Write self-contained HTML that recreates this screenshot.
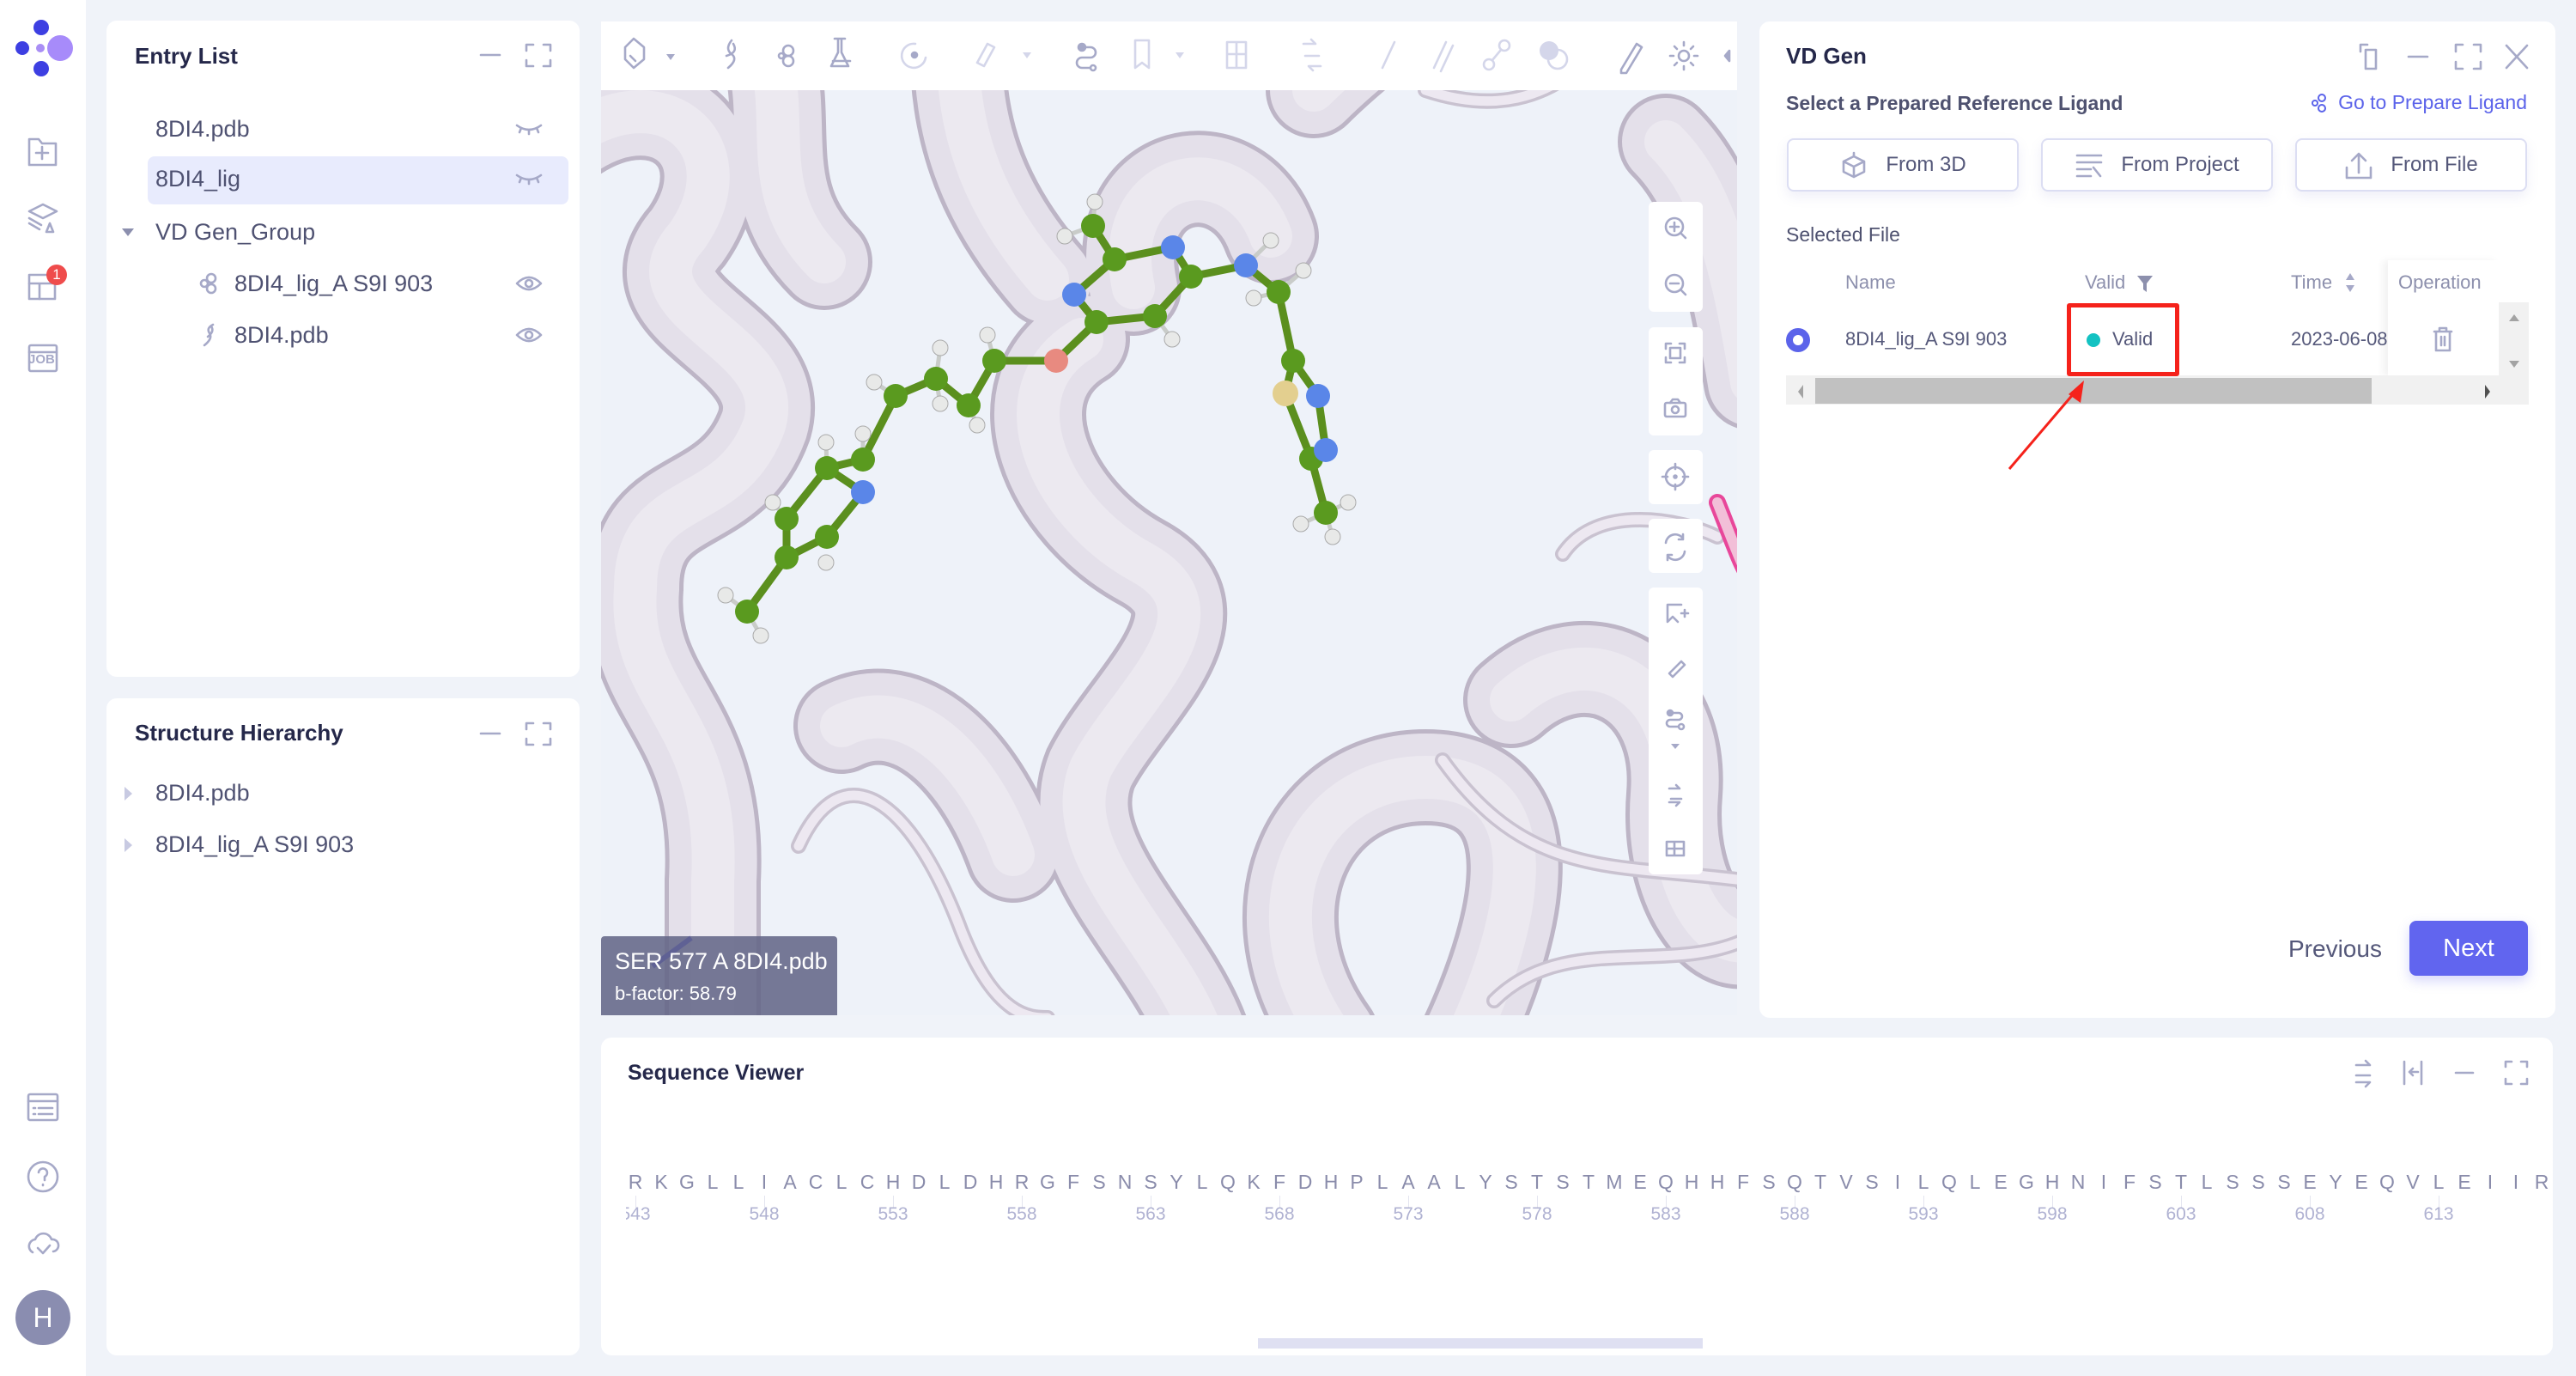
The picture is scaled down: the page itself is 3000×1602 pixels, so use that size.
<!DOCTYPE html>
<html><head><meta charset="utf-8">
<style>
*{box-sizing:border-box;margin:0;padding:0}
body{width:3000px;height:1602px;background:#f0f3f9;font-family:"Liberation Sans",sans-serif;position:relative;overflow:hidden;color:#4a4d6b}
.abs{position:absolute}
.panel{position:absolute;background:#fff;border-radius:12px}
.t{position:absolute;white-space:nowrap;line-height:1}
.title{font-size:26px;font-weight:bold;color:#25284a}
.item{font-size:27px;color:#4f5272}
svg{position:absolute;overflow:visible}
.ic{stroke:#a6a9c8;fill:none;stroke-width:2.6;stroke-linecap:round;stroke-linejoin:round}
.lt{stroke:#d4d6ea}
.btn{position:absolute;border:2px solid #dcdef3;border-radius:8px;background:#fff;box-shadow:0 6px 14px rgba(120,125,200,.12);font-size:24px;color:#55587a;display:flex;align-items:center;justify-content:center;gap:20px}
</style></head><body>

<!-- Sidebar -->
<div class="abs" style="left:0;top:0;width:100px;height:1602px;background:#fff"></div>
<svg style="left:0;top:0" width="100" height="120">
<circle cx="48" cy="32" r="9" fill="#3d3fe2"/><circle cx="26" cy="56" r="8" fill="#3d3fe2"/>
<circle cx="47" cy="56" r="5" fill="#a98ef5"/><circle cx="70" cy="56" r="15" fill="#a78bfa"/>
<circle cx="48" cy="80" r="9" fill="#3d3fe2"/></svg>
<svg style="left:30px;top:158px" width="40" height="280" class="ic">
<path d="M4 4h11l4 5h16v25H4z M19 13v14 M12 20h14"/>
<path d="M20 80l16 8-16 8-16-8z M4 96l14 8 M4 102l12 7 M24 112l4-10 4 10z"/>
<rect x="4" y="162" width="30" height="28"/><path d="M4 172h30 M16 172v18"/>
<rect x="4" y="244" width="32" height="30" rx="2"/><path d="M4 252h32"/>
</svg>
<div class="abs" style="left:54px;top:308px;width:24px;height:24px;border-radius:12px;background:#ef4c4c;color:#fff;font-size:17px;text-align:center;line-height:24px">1</div>
<div class="t" style="left:33px;top:411px;font-size:15px;font-weight:bold;color:#a6a9c8">JOB</div>
<svg style="left:30px;top:1272px" width="40" height="200" class="ic">
<rect x="3" y="2" width="34" height="30" rx="2"/><path d="M3 10h34 M9 18h2 M15 18h16 M9 25h2 M15 25h16"/>
<circle cx="20" cy="98" r="17"/><path d="M15 93a5 5 0 1 1 7 5v4 M20 107v1"/>
<path d="M8 186a8 8 0 0 1 3-15 10 10 0 0 1 19 0 7 7 0 0 1 2 14 M14 181l6 6 8-9"/>
</svg>
<div class="abs" style="left:18px;top:1502px;width:64px;height:64px;border-radius:32px;background:#8a8db0;color:#fff;font-size:32px;text-align:center;line-height:64px">H</div>

<!-- Entry List -->
<div class="panel" style="left:124px;top:24px;width:551px;height:764px"></div>
<div class="t title" style="left:157px;top:52px">Entry List</div>
<svg style="left:558px;top:50px" width="90" height="30" class="ic"><path d="M2 14h22 M55 9V2h8 M75 2h8v7 M55 20v7h8 M75 27h8v-7"/></svg>
<div class="abs" style="left:172px;top:182px;width:490px;height:56px;background:#e8ebfd;border-radius:8px"></div>
<div class="t item" style="left:181px;top:137px">8DI4.pdb</div>
<div class="t item" style="left:181px;top:195px">8DI4_lig</div>
<div class="t item" style="left:181px;top:257px">VD Gen_Group</div>
<div class="t item" style="left:273px;top:317px">8DI4_lig_A S9I 903</div>
<div class="t item" style="left:273px;top:377px">8DI4.pdb</div>
<svg style="left:140px;top:262px" width="20" height="20"><path d="M2 4h14l-7 9z" fill="#8c8fae"/></svg>
<svg style="left:600px;top:140px" width="40" height="280" class="ic">
<path d="M2 6q14 10 28 0 M7 9l-2 5 M16 11v5 M25 9l2 5"/>
<path d="M2 64q14 10 28 0 M7 67l-2 5 M16 69v5 M25 67l2 5"/>
<path d="M2 190q14-14 28 0q-14 14-28 0z"/><circle cx="16" cy="190" r="4"/>
<path d="M2 250q14-14 28 0q-14 14-28 0z"/><circle cx="16" cy="250" r="4"/>
</svg>
<svg style="left:232px;top:318px" width="24" height="90" class="ic">
<circle cx="14" cy="6" r="5"/><circle cx="14" cy="18" r="5"/><circle cx="6" cy="12" r="4"/>
<path d="M16 60q-8 4-4 10t-6 14 M14 62q4 6-4 12"/>
</svg>

<!-- Structure Hierarchy -->
<div class="panel" style="left:124px;top:813px;width:551px;height:765px"></div>
<div class="t title" style="left:157px;top:840px">Structure Hierarchy</div>
<svg style="left:558px;top:840px" width="90" height="30" class="ic"><path d="M2 14h22 M55 9V2h8 M75 2h8v7 M55 20v7h8 M75 27h8v-7"/></svg>
<svg style="left:143px;top:912px" width="20" height="80"><path d="M2 4v16l9-8z M2 64v16l9-8z" fill="#c8cae2"/></svg>
<div class="t item" style="left:181px;top:910px">8DI4.pdb</div>
<div class="t item" style="left:181px;top:970px">8DI4_lig_A S9I 903</div>

<!-- Viewer -->
<div class="abs" style="left:700px;top:25px;width:1323px;height:1157px;background:#eef2f9;overflow:hidden">
<svg style="left:0;top:0" width="1323" height="1157">
<defs>
<g id="rib" fill="none" stroke-linecap="round">
<path d="M-30 130 C80 60 170 150 100 250 C20 340 220 370 190 470 C150 580 40 540 40 660 C30 790 140 810 130 1000 L130 1200"/>
<path d="M160 -30 C250 80 160 180 260 280"/>
<path d="M420 -30 C400 120 450 220 520 300"/>
<path d="M560 370 C460 430 520 570 630 630 C740 690 610 790 570 870 C530 970 660 1070 700 1180"/>
<path d="M850 1180 C750 1040 820 880 960 880 C1110 880 1070 1050 1010 1180"/>
<path d="M1060 790 C1150 710 1260 770 1250 900 C1240 1020 1310 1100 1350 1060"/>
<path d="M280 820 C360 780 440 860 480 970"/>
<path d="M620 310 C590 170 740 140 780 250"/>
<path d="M830 80 C880 30 940 -10 960 -40"/>
<path d="M1240 140 C1300 200 1320 300 1340 420"/>
</g>
</defs>
<use href="#rib" stroke="#bdb5c6" stroke-width="112"/>
<use href="#rib" stroke="#e4e0ea" stroke-width="102"/>
<use href="#rib" stroke="#ece9f0" stroke-width="50"/>
<g fill="none" stroke-linecap="round">
<g stroke="#c9c2d0" stroke-width="18">
<path d="M230 960 C280 850 360 900 420 1060 C460 1160 500 1160 520 1160"/>
<path d="M960 80 C1080 120 1150 60 1200 -20"/>
<path d="M1120 620 C1160 560 1260 580 1300 600"/>
<path d="M980 860 C1080 1000 1180 980 1330 1000"/>
<path d="M1040 1140 C1120 1060 1240 1110 1330 1070"/>
</g>
<g stroke="#ede8f1" stroke-width="11">
<path d="M230 960 C280 850 360 900 420 1060 C460 1160 500 1160 520 1160"/>
<path d="M960 80 C1080 120 1150 60 1200 -20"/>
<path d="M1120 620 C1160 560 1260 580 1300 600"/>
<path d="M980 860 C1080 1000 1180 980 1330 1000"/>
<path d="M1040 1140 C1120 1060 1240 1110 1330 1070"/>
</g>
<path d="M1300 560 C1320 610 1330 640 1340 650" stroke="#e8479a" stroke-width="20"/>
<path d="M1300 560 C1320 610 1330 640 1340 650" stroke="#f2bfd8" stroke-width="12"/>
</g>
<!-- molecule -->
<g stroke="#5b8f1e" stroke-width="9" fill="none">
<path d="M170 687 L216 624 L216 579 L263 520 L305 548 L263 600 L216 624 M263 520 L305 510 L343 436 L390 416 L428 447 L458 395 L530 395 L577 350 L551 318 L598 277 L666 263 L687 297 L645 343 L577 350 M598 277 L573 238 M687 297 L751 284 L789 315 L806 395 L797 433 L827 509 L844 572 M806 395 L835 436 L844 499 L827 509"/>
</g>
<g stroke="#c9ccc9" stroke-width="5">
<path d="M170 687 L145 668 M170 687 L186 715 M216 579 L200 560 M263 520 L262 490 M305 510 L305 480 M343 436 L318 420 M390 416 L395 380 M428 447 L438 470 M458 395 L450 365 M573 238 L575 210 M573 238 L540 250 M645 343 L665 370 M751 284 L780 255 M789 315 L818 290 M789 315 L760 322 M844 572 L870 560 M844 572 L852 600 M844 572 L815 585 M390 416 L395 445"/>
</g>
<g fill="#e8e9e8" stroke="#aaa" stroke-width="1">
<circle cx="145" cy="668" r="9"/><circle cx="186" cy="715" r="9"/><circle cx="200" cy="560" r="9"/><circle cx="262" cy="490" r="9"/><circle cx="305" cy="480" r="9"/><circle cx="318" cy="420" r="9"/><circle cx="395" cy="380" r="9"/><circle cx="438" cy="470" r="9"/><circle cx="450" cy="365" r="9"/><circle cx="575" cy="210" r="9"/><circle cx="540" cy="250" r="9"/><circle cx="665" cy="370" r="9"/><circle cx="780" cy="255" r="9"/><circle cx="818" cy="290" r="9"/><circle cx="760" cy="322" r="9"/><circle cx="870" cy="560" r="9"/><circle cx="852" cy="600" r="9"/><circle cx="815" cy="585" r="9"/><circle cx="395" cy="445" r="9"/><circle cx="262" cy="630" r="9"/>
</g>
<g fill="#5a9a1f">
<circle cx="170" cy="687" r="14"/><circle cx="216" cy="624" r="14"/><circle cx="216" cy="579" r="14"/><circle cx="263" cy="600" r="14"/><circle cx="263" cy="520" r="14"/><circle cx="305" cy="510" r="14"/><circle cx="343" cy="436" r="14"/><circle cx="390" cy="416" r="14"/><circle cx="428" cy="447" r="14"/><circle cx="458" cy="395" r="14"/><circle cx="577" cy="350" r="14"/><circle cx="598" cy="277" r="14"/><circle cx="573" cy="238" r="14"/><circle cx="645" cy="343" r="14"/><circle cx="687" cy="297" r="14"/><circle cx="789" cy="315" r="14"/><circle cx="806" cy="395" r="14"/><circle cx="827" cy="509" r="14"/><circle cx="844" cy="572" r="14"/>
</g>
<g fill="#5a86e8"><circle cx="305" cy="548" r="14"/><circle cx="551" cy="318" r="14"/><circle cx="666" cy="263" r="14"/><circle cx="751" cy="284" r="14"/><circle cx="835" cy="436" r="14"/><circle cx="844" cy="499" r="14"/></g>
<circle cx="530" cy="395" r="14" fill="#e88a80"/>
<circle cx="797" cy="433" r="15" fill="#e3cf8f"/>
<path d="M60 1100 L105 1067" stroke="#3838e8" stroke-width="6"/>
</svg>
<div class="abs" style="left:0;top:1065px;width:275px;height:92px;background:rgba(100,102,135,.88);border-radius:4px 4px 0 0;color:#fff">
<div class="t" style="left:16px;top:16px;font-size:27px">SER 577 A 8DI4.pdb</div>
<div class="t" style="left:16px;top:56px;font-size:22px">b-factor: 58.79</div></div>
</div>
<!-- top toolbar -->
<div class="abs" style="left:700px;top:25px;width:1323px;height:80px;background:#fff"></div>
<svg style="left:700px;top:25px" width="1323" height="80" class="ic">
<path d="M28 30l10-10 12 10v14l-12 10-10-10z M34 40l6 6"/><path d="M76 38h10l-5 7z" fill="#a6a9c8" stroke="none"/>
<path d="M152 22q-8 10 0 16t-4 16 M154 26q6 10-8 14"/>
<circle cx="218" cy="34" r="6"/><circle cx="218" cy="46" r="6"/><circle cx="210" cy="40" r="3"/>
<path d="M272 20h12 M276 20v16l-8 16h20l-8-16v-16 M270 46h20"/>
<path d="M366 26a14 14 0 1 0 12 16" class="lt"/><circle cx="365" cy="39" r="3" fill="#a6a9c8"/>
<path d="M450 26l8 4-12 22-8-4z" class="lt"/><path d="M491 36h10l-5 7z" fill="#d4d6ea" stroke="none"/>
<circle cx="560" cy="30" r="4" fill="#a6a9c8"/><path d="M560 30h10a6 6 0 0 1 0 12h-10a6 6 0 0 0 0 12h10"/><circle cx="573" cy="54" r="3"/>
<path d="M622 22h16v32l-8-6-8 6z" class="lt"/><path d="M669 36h10l-5 7z" fill="#d4d6ea" stroke="none"/>
<path d="M729 24h22v30h-22z M729 38h22 M740 24v30" class="lt"/>
<path d="M818 26h14l-5-5 M838 52h-14l5 5 M820 40h16" class="lt"/>
<path d="M910 54l14-30" class="lt"/>
<path d="M984 24l-14 30 M992 28l-14 30" class="lt"/>
<circle cx="1034" cy="50" r="6" class="lt"/><circle cx="1052" cy="28" r="6" class="lt"/><path d="M1038 45l10-12" class="lt"/>
<circle cx="1104" cy="34" r="11" fill="#d4d6ea" stroke="none"/><circle cx="1114" cy="44" r="11" class="lt"/>
<path d="M1188 56l18-30 6 4-18 30h-6z"/>
<circle cx="1261" cy="40" r="6"/><path d="M1261 24v4 M1261 52v4 M1245 40h4 M1273 40h4 M1250 29l3 3 M1269 48l3 3 M1250 51l3-3 M1269 32l3-3"/>
<path d="M1314 34l-5 6 5 6z" fill="#a6a9c8"/>
</svg>
<!-- right mini toolbar -->
<div class="abs" style="left:1920px;top:235px;width:63px;height:128px;background:#fff;border-radius:6px"></div>
<div class="abs" style="left:1920px;top:381px;width:63px;height:126px;background:#fff;border-radius:6px"></div>
<div class="abs" style="left:1920px;top:524px;width:63px;height:63px;background:#fff;border-radius:6px"></div>
<div class="abs" style="left:1920px;top:604px;width:63px;height:63px;background:#fff;border-radius:6px"></div>
<div class="abs" style="left:1920px;top:684px;width:63px;height:334px;background:#fff;border-radius:6px"></div>
<svg style="left:1920px;top:0" width="63" height="1020" class="ic">
<circle cx="30" cy="264" r="10"/><path d="M37 271l6 6 M30 259v10 M25 264h10"/>
<circle cx="30" cy="330" r="10"/><path d="M37 337l6 6 M25 330h10"/>
<path d="M20 406v-6h6 M36 400h6v6 M20 416v6h6 M36 422h6v-6"/><rect x="25" y="405" width="12" height="12"/>
<rect x="19" y="469" width="24" height="16" rx="2"/><path d="M25 469l3-4h6l3 4"/><circle cx="31" cy="477" r="4"/>
<circle cx="31" cy="555" r="11"/><path d="M31 540v6 M31 564v6 M16 555h6 M40 555h6"/><circle cx="31" cy="555" r="1.5"/>
<path d="M20 632a11 11 0 0 1 20-5 M42 642a11 11 0 0 1-20 5 M40 622v6h-5 M22 652v-6h5"/>
<path d="M22 704h16 M22 704v20l6-6 6 6 M38 714h8 M42 710v8"/>
<path d="M24 784l14-14 4 4-14 14z"/>
<circle cx="25" cy="830" r="3" fill="#a6a9c8"/><path d="M25 830h10a4 4 0 0 1 0 8h-10a4 4 0 0 0 0 8h10"/><circle cx="38" cy="846" r="3"/>
<path d="M26 866h10l-5 6z" fill="#a6a9c8" stroke="none"/>
<path d="M24 918h12l-4-4 M38 930h-12 M24 934h12l-4 4"/>
<path d="M21 980h20v16h-20z M21 988h20 M30 980v16"/>
</svg>

<!-- VD Gen panel -->
<div class="panel" style="left:2049px;top:25px;width:927px;height:1160px"></div>
<div class="t title" style="left:2080px;top:52px">VD Gen</div>
<svg style="left:2745px;top:48px" width="200" height="36" class="ic">
<path d="M4 4h8 M4 4v8 M10 10h12v22h-12z"/><path d="M60 18h22"/>
<path d="M115 12V4h8 M136 4h8v8 M115 24v8h8 M136 32h8v-8"/><path d="M174 5l24 26 M198 5l-24 26"/>
</svg>
<div class="t" style="left:2080px;top:109px;font-size:23px;font-weight:bold;color:#4f5270">Select a Prepared Reference Ligand</div>
<div class="t" style="left:2718px;top:108px;font-size:23px;color:#5b63ea;width:225px;text-align:right">Go to Prepare Ligand</div>
<svg style="left:2690px;top:108px" width="24" height="26"><g stroke="#5b63ea" fill="none" stroke-width="2"><circle cx="14" cy="6" r="4"/><circle cx="14" cy="18" r="4"/><circle cx="6" cy="12" r="3"/></g></svg>
<div class="btn" style="left:2081px;top:161px;width:270px;height:62px"><svg style="position:static" width="34" height="34" class="ic"><path d="M17 3v4 M5 13l12-6 12 6v12l-12 6-12-6z M5 13l12 6 12-6 M17 19v12"/></svg>From 3D</div>
<div class="btn" style="left:2377px;top:161px;width:270px;height:62px"><svg style="position:static" width="34" height="34" class="ic"><path d="M3 6h28 M3 14h28 M3 22h16 M3 30h16 M22 20l8 10"/></svg>From Project</div>
<div class="btn" style="left:2673px;top:161px;width:270px;height:62px"><svg style="position:static" width="34" height="34" class="ic"><path d="M17 26V4 M9 12l8-8 8 8 M3 20v12h28V20"/></svg>From File</div>
<div class="t" style="left:2080px;top:262px;font-size:23px;color:#4f5270">Selected File</div>
<div class="t" style="left:2149px;top:318px;font-size:22px;color:#8d90ad">Name</div>
<div class="t" style="left:2428px;top:318px;font-size:22px;color:#8d90ad">Valid</div>
<svg style="left:2488px;top:320px" width="20" height="22"><path d="M1 1h18l-7 9v10l-4-3v-7z" fill="#8d90ad"/></svg>
<div class="t" style="left:2668px;top:318px;font-size:22px;color:#8d90ad">Time</div>
<svg style="left:2730px;top:316px" width="14" height="26"><path d="M7 2l5 8H2z M7 24l5-8H2z" fill="#a6a9c8"/></svg>
<div class="abs" style="left:2781px;top:303px;width:130px;height:135px;background:#fff;box-shadow:-6px 0 8px rgba(0,0,0,.05)"></div>
<div class="t" style="left:2793px;top:318px;font-size:22px;color:#8d90ad">Operation</div>
<div class="abs" style="left:2080px;top:382px;width:28px;height:28px;border-radius:14px;border:8px solid #5b63ea;background:#fff"></div>
<div class="t" style="left:2149px;top:384px;font-size:22px;color:#55587a">8DI4_lig_A S9I 903</div>
<div class="abs" style="left:2430px;top:388px;width:16px;height:16px;border-radius:8px;background:#13c2c2"></div>
<div class="t" style="left:2460px;top:384px;font-size:22px;color:#55587a">Valid</div>
<div class="abs" style="left:2668px;top:384px;width:113px;overflow:hidden;font-size:22px;color:#55587a;white-space:nowrap;line-height:1">2023-06-08</div>
<svg style="left:2833px;top:380px" width="24" height="30" class="ic"><path d="M2 6h20 M8 6V2h8v4 M4 6v22h16V6 M10 12v10 M14 12v10"/></svg>
<div class="abs" style="left:2910px;top:352px;width:35px;height:85px;background:#f1f1f1"></div>
<svg style="left:2910px;top:352px" width="35" height="85"><path d="M12 22l6-8 6 8z M12 68l6 8 6-8z" fill="#a3a3a3"/></svg>
<div class="abs" style="left:2080px;top:437px;width:865px;height:34px;background:#f1f1f1"></div>
<div class="abs" style="left:2114px;top:440px;width:648px;height:30px;background:#c1c1c1"></div>
<svg style="left:2090px;top:444px" width="850" height="24"><path d="M10 4v16l-6-8z" fill="#a3a3a3"/><path d="M804 4v16l6-8z" fill="#505050"/></svg>
<div class="abs" style="left:2407px;top:353px;width:131px;height:85px;border:5px solid #f5221b;border-radius:3px"></div>
<svg style="left:2330px;top:438px" width="110" height="120"><path d="M10 108L92 12" stroke="#f5221b" stroke-width="3"/><path d="M97 5l-4 26-14-10z" fill="#f5221b"/></svg>
<div class="t" style="left:2665px;top:1091px;font-size:28px;color:#55587a">Previous</div>
<div class="abs" style="left:2806px;top:1072px;width:138px;height:64px;background:#6165ef;border-radius:8px;color:#fff;font-size:29px;text-align:center;line-height:64px;box-shadow:0 6px 14px rgba(97,101,239,.25)">Next</div>

<!-- Sequence Viewer -->
<div class="panel" style="left:700px;top:1208px;width:2273px;height:370px"></div>
<div class="t title" style="left:731px;top:1237px;font-size:25px">Sequence Viewer</div>
<svg style="left:2740px;top:1232px" width="210" height="34" class="ic">
<path d="M4 8h16l-5-5 M20 20H4 M4 28h16l-5 5"/><path d="M60 4v26 M80 4v26 M66 16h10 M70 12l-4 4 4 4"/><path d="M120 17h20"/><path d="M178 10V4h7 M196 4h7v6 M178 24v6h7 M196 30h7v-6"/>
</svg>
<div class="abs" style="left:729px;top:1360px;width:2244px;height:80px;overflow:hidden">
<div id="seq"></div>
</div>
<div class="abs" style="left:1465px;top:1558px;width:518px;height:12px;background:#dfe0f2"></div>
<script>
var s="RKGLLIACLCHDLDHRGFSNSYLQKFDHPLAALYSTSTMEQHHFSQTVSILQLEGHNIFSTLSSSEYEQVLEIIR",h="";
for(var i=0;i<s.length;i++){var x=11+30*i;h+='<div class="t" style="left:'+(x-10)+'px;top:5px;width:20px;text-align:center;font-size:23px;color:#8a8cab">'+s[i]+'</div>';
if(i%5==0){h+='<div class="abs" style="left:'+x+'px;top:32px;width:1px;height:14px;background:#e4e5f0"></div><div class="t" style="left:'+(x-30)+'px;top:43px;width:60px;text-align:center;font-size:21px;color:#b0b2d2">'+(543+i)+'</div>';}}
document.getElementById('seq').innerHTML=h;
</script>
</body></html>
